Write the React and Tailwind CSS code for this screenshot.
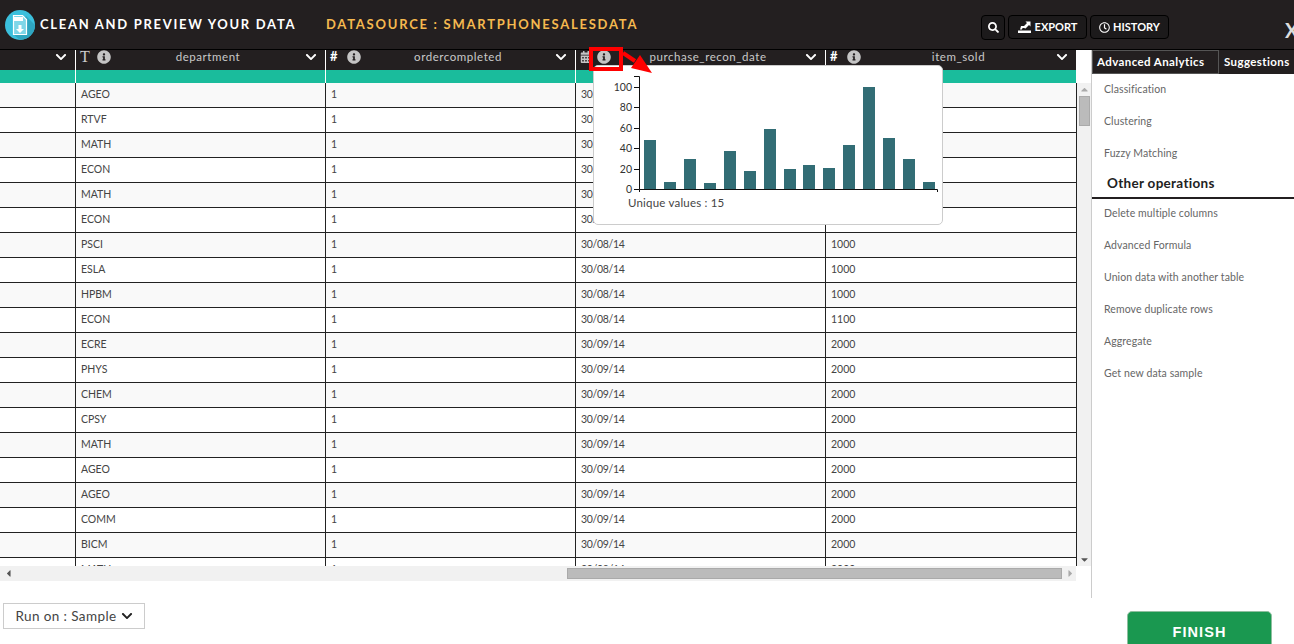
import { FaChevronDown, FaInfoCircle, FaSearch, FaRegClock, FaCalendarAlt, FaCaretUp, FaCaretDown, FaCaretLeft, FaCaretRight } from "react-icons/fa";

const departments = ["AGEO", "RTVF", "MATH", "ECON", "MATH", "ECON", "PSCI", "ESLA", "HPBM", "ECON", "ECRE", "PHYS", "CHEM", "CPSY", "MATH", "AGEO", "AGEO", "COMM", "BICM", "MATH"];

const bars = [
  [644, 140], [664, 182], [684, 159], [704, 183], [724, 151],
  [744, 171], [764, 129], [784, 169], [803, 165], [823, 168],
  [843, 145], [863, 87], [883, 138], [903, 159], [923, 182],
];

const ticks = [[100, 87], [80, 107], [60, 128], [40, 148], [20, 169], [0, 189]];

const analytics = ["Classification", "Clustering", "Fuzzy Matching"];
const operations = ["Delete multiple columns", "Advanced Formula", "Union data with another table", "Remove duplicate rows", "Aggregate", "Get new data sample"];

const ColumnHeader = ({ type, name }) => (
  <div className="relative flex h-[20px] items-center border-l border-white pb-[6px] pl-[4px] text-[11.500px] text-[#c9c9c9]">
    <span className="w-[12px] text-white">{type}</span>
    <FaInfoCircle className="ml-[5px] text-[14px] text-[#c4c4c4]" />
    <span className="flex-1 text-center tracking-[0.55px]">{name}</span>
    <FaChevronDown className="mr-[8px] text-[12px] text-white" />
  </div>
);

const Row = ({ dept, index }) => {
  const date = index < 10 ? "30/08/14" : "30/09/14";
  const sold = index < 9 ? "1000" : index === 9 ? "1100" : "2000";
  const cell = "flex items-center border-l border-[#222] pl-[5px]";
  return (
    <div className={`grid h-[25px] grid-cols-[75px_250px_250px_250px_251px] border-b border-[#222] text-[10.500px] text-[#444] ${index % 2 === 0 ? "bg-[#f9f9f9]" : "bg-white"}`}>
      <div />
      <div className={cell}>{dept}</div>
      <div className={cell}>1</div>
      <div className={`${cell} tracking-[-0.3px]`}>{date}</div>
      <div className={cell}>{sold}</div>
    </div>
  );
};

const Logo = () => (
  <svg width="30" height="30" viewBox="0 0 30 30" className="shrink-0">
    <circle cx="15" cy="15" r="15" fill="#3bbfdc" />
    <path d="M21 6L30 15A15 15 0 0 1 15 30L8 24z" fill="#2fa5c0" />
    <path d="M8.500 5.500h9l4 4v15h-13z" fill="#7fd6e8" stroke="#fff" strokeWidth="1.200" />
    <rect x="9" y="7" width="9" height="4" fill="#fff" />
    <path d="M13.500 15h3v4h2.500l-4 4-4-4h2.500z" fill="#fff" />
  </svg>
);

const ExportIcon = () => (
  <svg width="13" height="12" viewBox="0 0 13 12" className="text-white">
    <path d="M0 9.500h13V12H0z" fill="currentColor" />
    <path d="M2 8.500L3 5h3L9 2 7.500 0.500H12.500V5.500L11 4 7.500 7.500 6 7H4.500L4 8.500z" fill="currentColor" />
  </svg>
);

const Popup = () => (
  <div className="absolute left-[593px] top-[65px] h-[160px] w-[350px] rounded-[5px] border border-[#ccc] bg-white">
    <svg width="350" height="130" viewBox="594 66 350 130" className="block">
      <path d="M634 76.500H639.500V189.500H937.500V192M639.500 189.500V192" fill="none" stroke="#111" strokeWidth="1" />
      {ticks.map(([label, y]) => (
        <g key={label}>
          <path d={`M634 ${y + 0.5}H639`} stroke="#111" strokeWidth="1" />
          <text x="632" y={y + 4} textAnchor="end" fontSize="10.500" fill="#333" fontFamily="Lato, sans-serif">{label}</text>
        </g>
      ))}
      {bars.map(([x, top]) => (
        <rect key={x} x={x} y={top} width="12" height={189 - top} fill="#326d75" />
      ))}
    </svg>
    <div className="ml-[34px] text-[11.500px] leading-[14px] tracking-[0.2px] text-[#444]">Unique values : 15</div>
  </div>
);

const RedMarker = () => (
  <>
    <div className="absolute left-[589px] top-[47px] h-[24px] w-[34px] border-[4px] border-[#f00]" />
    <svg width="34" height="30" viewBox="0 0 34 30" className="absolute left-[622px] top-[48px]">
      <path d="M1 5L13 13" stroke="#f00" strokeWidth="4" />
      <path d="M9 20L18 7L30 25z" fill="#f00" />
    </svg>
  </>
);

export default function App() {
  return (
    <div className="relative h-[644px] w-[1294px] overflow-hidden bg-white font-['Lato',sans-serif]">
      {/* header */}
      <div className="flex h-[50px] items-center border-b border-black bg-[#231f20] pl-[5px]">
        <Logo />
        <span className="ml-[5px] w-[286px] shrink-0 text-[13px] font-bold tracking-[1.7px] text-white">CLEAN AND PREVIEW YOUR DATA</span>
        <span className="w-[655px] shrink-0 text-[13px] font-bold tracking-[1.75px] text-[#f5b94f]">DATASOURCE : SMARTPHONESALESDATA</span>
        <div className="mt-[6px] flex shrink-0 gap-[3px] text-[11px] font-bold text-white">
          <button className="flex h-[25px] w-[24px] items-center justify-center rounded-[4px] border border-black bg-[#1c1a1b]">
            <FaSearch className="text-[11px]" />
          </button>
          <button className="flex h-[24px] w-[79px] items-center justify-center gap-[4px] rounded-[4px] border border-black bg-[#1c1a1b]">
            <ExportIcon />
            EXPORT
          </button>
          <button className="flex h-[24px] w-[79px] items-center justify-center gap-[3px] rounded-[4px] border border-black bg-[#1c1a1b]">
            <FaRegClock className="text-[11px]" />
            HISTORY
          </button>
        </div>
        <span className="ml-[116px] mt-[10px] shrink-0 text-[20px] font-bold text-[#ddd]">X</span>
      </div>

      <div className="flex h-[548px]">
        {/* table */}
        <div className="w-[1091px] shrink-0">
          <div className="flex h-[516px]">
            <div className="w-[1076px] overflow-hidden">
              <div className="grid h-[20px] grid-cols-[75px_250px_250px_250px_251px] bg-[#231f20]">
                <div className="flex items-center justify-end pb-[6px] pr-[8px]">
                  <FaChevronDown className="text-[12px] text-white" />
                </div>
                <ColumnHeader type={<span className="font-['Liberation_Serif',serif] text-[16px] text-[#ccc]">T</span>} name="department" />
                <ColumnHeader type={<span className="text-[13px] font-bold">#</span>} name="ordercompleted" />
                <ColumnHeader type={<FaCalendarAlt className="text-[12px] text-[#c4c4c4]" />} name="purchase_recon_date" />
                <ColumnHeader type={<span className="text-[13px] font-bold">#</span>} name="item_sold" />
              </div>
              <div className="grid h-[13px] grid-cols-[75px_250px_250px_250px_251px] bg-[#1abc9c]">
                <div />
                <div className="border-l border-white" />
                <div className="border-l border-white" />
                <div className="border-l border-white" />
                <div className="border-l border-white" />
              </div>
              {departments.map((dept, i) => (
                <Row key={i} dept={dept} index={i} />
              ))}
            </div>
            <div className="mt-[33px] flex w-[15px] flex-col items-center border-l border-[#222] bg-[#f1f1f1]">
              <FaCaretUp className="mt-[1px] text-[11px] text-[#aaa]" />
              <div className="mt-[1px] h-[30px] w-[11px] border border-[#aaa] bg-[#bbb]" />
              <FaCaretDown className="mt-auto mb-[1px] text-[11px] text-[#555]" />
            </div>
          </div>
          <div className="flex h-[15px] w-[1076px] items-center bg-[#f1f1f1] pl-[3px]">
            <FaCaretLeft className="shrink-0 text-[11px] text-[#555]" />
            <div className="ml-[553px] h-[11px] w-[495px] shrink-0 border border-[#aaa] bg-[#bbb]" />
            <FaCaretRight className="ml-[3px] shrink-0 text-[11px] text-[#aaa]" />
          </div>
        </div>

        {/* sidebar */}
        <div className="flex-1 border-l border-[#ccc]">
          <div className="flex h-[24px] bg-[#231f20] text-[11.500px] font-bold tracking-[0.4px] text-white">
            <div className="flex w-[127px] items-center border border-[#555] pl-[4px]">Advanced Analytics</div>
            <div className="flex items-center pl-[5px]">Suggestions</div>
          </div>
          <div className="pl-[12px] text-[10.500px] tracking-[0.1px] text-[#666]">
            {analytics.map((item) => (
              <div key={item} className="flex h-[32px] items-center">{item}</div>
            ))}
          </div>
          <div className="mt-[-3px] flex h-[32px] items-center border-b-2 border-[#231f20] pl-[15px] pt-[2px] text-[13.500px] font-bold tracking-[0.3px] text-[#222]">Other operations</div>
          <div className="mt-[-1px] pl-[12px] text-[10.500px] tracking-[0.1px] text-[#666]">
            {operations.map((item) => (
              <div key={item} className="flex h-[32px] items-center">{item}</div>
            ))}
          </div>
        </div>
      </div>

      {/* footer */}
      <div className="flex items-start justify-between pl-[3px] pr-[22px]">
        <button className="mt-[5px] flex h-[26px] w-[142px] items-center justify-center gap-[4px] border border-[#ccc] text-[13.500px] tracking-[0.4px] text-[#444]">
          Run on : Sample <FaChevronDown className="text-[12px] text-[#222]" />
        </button>
        <button className="mt-[13px] h-[40px] w-[145px] rounded-t-[5px] border border-[#8fbf9f] bg-[#1a9850] pt-[3px] font-['Liberation_Sans',sans-serif] text-[14.500px] font-bold tracking-[1.1px] text-white">FINISH</button>
      </div>

      <Popup />
      <RedMarker />
    </div>
  );
}
